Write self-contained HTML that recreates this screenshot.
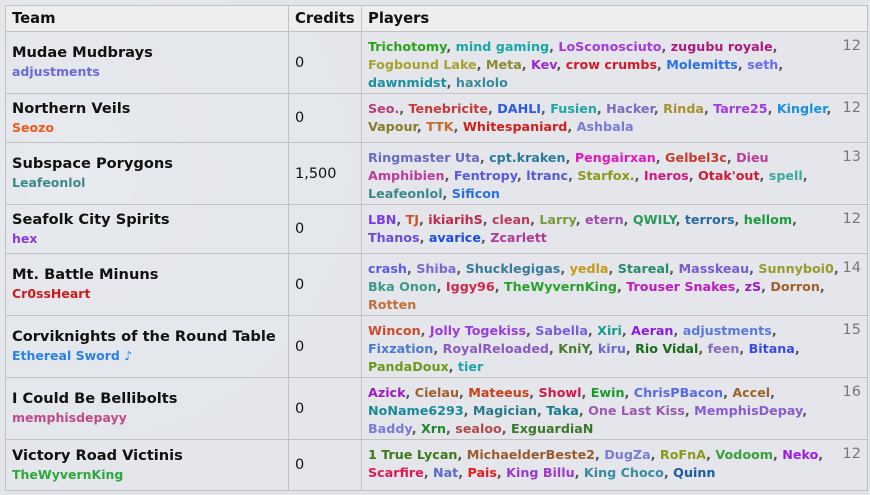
<!DOCTYPE html>
<html><head><meta charset="utf-8"><style>
html,body{margin:0;padding:0;width:870px;height:495px;overflow:hidden;background:#e4e7eb;font-family:"DejaVu Sans","Liberation Sans",sans-serif;}
body{background:radial-gradient(circle at 80px 170px,#f4f6f8 0,#e6e9ed 80px,#e1e4e9 300px),#e2e5e9;}
table{position:absolute;left:5px;top:5px;border-collapse:collapse;table-layout:fixed;width:862px;}
td,th{border:1px solid #c2c2c2;vertical-align:middle;padding:0 6px;white-space:nowrap;}
th{background:#eeeeee;height:25px;text-align:left;font-size:14.8px;font-weight:bold;color:#111;}
td{background:rgba(228,231,236,0.75);}
.t{font-size:14.6px;font-weight:bold;color:#111;line-height:18px;}
.c{font-size:14.5px;color:#111;}
.m{font-size:12.5px;font-weight:bold;line-height:19px;}
.p{font-size:12.7px;font-weight:bold;line-height:18px;color:#555;position:relative;vertical-align:top;padding-top:6px;}
.p b{font-weight:bold}
.n{position:absolute;right:6px;top:5px;font-size:14.5px;font-weight:normal;color:#777;}
</style></head><body>
<table>
<colgroup><col style="width:283px"><col style="width:73px"><col style="width:506px"></colgroup>
<tr><th>Team</th><th>Credits</th><th>Players</th></tr>
<tr style="height:62px"><td><div class="t">Mudae Mudbrays</div><div class="m" style="color:#6a6adf">adjustments</div></td><td class="c">0</td>
<td class="p"><span class="n">12</span><b style="color:#2aa21a">Trichotomy</b>, <b style="color:#1aa6a6">mind gaming</b>, <b style="color:#a23ae0">LoSconosciuto</b>, <b style="color:#b0197a">zugubu royale</b>,<br><b style="color:#a8a030">Fogbound Lake</b>, <b style="color:#8a8a30">Meta</b>, <b style="color:#9a28d0">Kev</b>, <b style="color:#d01a2a">crow crumbs</b>, <b style="color:#2a70e8">Molemitts</b>, <b style="color:#6a6af0">seth</b>,<br><b style="color:#1a90a0">dawnmidst</b>, <b style="color:#3a8a9a">haxlolo</b></td></tr>
<tr style="height:49px"><td><div class="t">Northern Veils</div><div class="m" style="color:#ee5a1a">Seozo</div></td><td class="c">0</td>
<td class="p"><span class="n">12</span><b style="color:#b83a7a">Seo.</b>, <b style="color:#c83a3a">Tenebricite</b>, <b style="color:#2a5ae0">DAHLI</b>, <b style="color:#1aa6a6">Fusien</b>, <b style="color:#7a6ac0">Hacker</b>, <b style="color:#a8902a">Rinda</b>, <b style="color:#a23ae0">Tarre25</b>, <b style="color:#1a90e0">Kingler</b>,<br><b style="color:#8a7a2a">Vapour</b>, <b style="color:#c86a2a">TTK</b>, <b style="color:#d0201a">Whitespaniard</b>, <b style="color:#7a7ad8">Ashbala</b></td></tr>
<tr style="height:62px"><td><div class="t">Subspace Porygons</div><div class="m" style="color:#3a8a8a">Leafeonlol</div></td><td class="c">1,500</td>
<td class="p"><span class="n">13</span><b style="color:#6a6ac0">Ringmaster Uta</b>, <b style="color:#2a7a9a">cpt.kraken</b>, <b style="color:#e01ac0">Pengairxan</b>, <b style="color:#c83a2a">Gelbel3c</b>, <b style="color:#c03a9a">Dieu<br>Amphibien</b>, <b style="color:#5a5ae0">Fentropy</b>, <b style="color:#5a5ad0">ltranc</b>, <b style="color:#8a9a1a">Starfox.</b>, <b style="color:#d01a7a">Ineros</b>, <b style="color:#d01a3a">Otak'out</b>, <b style="color:#3aaa9a">spell</b>,<br><b style="color:#3a8a8a">Leafeonlol</b>, <b style="color:#2a70e0">Sificon</b></td></tr>
<tr style="height:49px"><td><div class="t">Seafolk City Spirits</div><div class="m" style="color:#8a3ae0">hex</div></td><td class="c">0</td>
<td class="p"><span class="n">12</span><b style="color:#7a3ae8">LBN</b>, <b style="color:#d0502a">TJ</b>, <b style="color:#c02a4a">ikiarihS</b>, <b style="color:#c03a5a">clean</b>, <b style="color:#7a9a3a">Larry</b>, <b style="color:#a04ab0">etern</b>, <b style="color:#2a9a5a">QWILY</b>, <b style="color:#2a6aa0">terrors</b>, <b style="color:#1a9a3a">hellom</b>,<br><b style="color:#6a4ad8">Thanos</b>, <b style="color:#1a4ae8">avarice</b>, <b style="color:#b03a9a">Zcarlett</b></td></tr>
<tr style="height:62px"><td><div class="t">Mt. Battle Minuns</div><div class="m" style="color:#d01a1a">Cr0ssHeart</div></td><td class="c">0</td>
<td class="p"><span class="n">14</span><b style="color:#5a5ae8">crash</b>, <b style="color:#7a6ad0">Shiba</b>, <b style="color:#3a7a9a">Shucklegigas</b>, <b style="color:#c09a1a">yedla</b>, <b style="color:#2a8a6a">Stareal</b>, <b style="color:#7a5ad0">Masskeau</b>, <b style="color:#9a9a2a">Sunnyboi0</b>,<br><b style="color:#3a9a8a">Bka Onon</b>, <b style="color:#d02a4a">Iggy96</b>, <b style="color:#2aa02a">TheWyvernKing</b>, <b style="color:#c01ac0">Trouser Snakes</b>, <b style="color:#9a1ad0">zS</b>, <b style="color:#a0602a">Dorron</b>,<br><b style="color:#c0703a">Rotten</b></td></tr>
<tr style="height:62px"><td><div class="t">Corviknights of the Round Table</div><div class="m" style="color:#2a80e8">Ethereal Sword ♪</div></td><td class="c">0</td>
<td class="p"><span class="n">15</span><b style="color:#d04a2a">Wincon</b>, <b style="color:#9a3ae0">Jolly Togekiss</b>, <b style="color:#7a5ae0">Sabella</b>, <b style="color:#1a9a8a">Xiri</b>, <b style="color:#8a1ae8">Aeran</b>, <b style="color:#5a7ae0">adjustments</b>,<br><b style="color:#4a7ad0">Fixzation</b>, <b style="color:#8a5ac0">RoyalReloaded</b>, <b style="color:#4a7a2a">KniY</b>, <b style="color:#6a6ad0">kiru</b>, <b style="color:#1a6a1a">Rio Vidal</b>, <b style="color:#8a6ac0">feen</b>, <b style="color:#3a4ae8">Bitana</b>,<br><b style="color:#6a9a1a">PandaDoux</b>, <b style="color:#1aa6a6">tier</b></td></tr>
<tr style="height:62px"><td><div class="t">I Could Be Bellibolts</div><div class="m" style="color:#c04a8a">memphisdepayy</div></td><td class="c">0</td>
<td class="p"><span class="n">16</span><b style="color:#a01ac0">Azick</b>, <b style="color:#a0602a">Cielau</b>, <b style="color:#c8401a">Mateeus</b>, <b style="color:#d01a4a">Showl</b>, <b style="color:#1a9a2a">Ewin</b>, <b style="color:#5a6ae0">ChrisPBacon</b>, <b style="color:#a0602a">Accel</b>,<br><b style="color:#1a8a9a">NoName6293</b>, <b style="color:#2a7a8a">Magician</b>, <b style="color:#1a7a8a">Taka</b>, <b style="color:#9a5ab0">One Last Kiss</b>, <b style="color:#8a5ad0">MemphisDepay</b>,<br><b style="color:#7a7ad8">Baddy</b>, <b style="color:#1a8a2a">Xrn</b>, <b style="color:#b04a4a">sealoo</b>, <b style="color:#3a7a2a">ExguardiaN</b></td></tr>
<tr style="height:51px"><td><div class="t">Victory Road Victinis</div><div class="m" style="color:#2aaa3a">TheWyvernKing</div></td><td class="c">0</td>
<td class="p"><span class="n">12</span><b style="color:#3a7a1a">1 True Lycan</b>, <b style="color:#9a5a2a">MichaelderBeste2</b>, <b style="color:#7a7ad8">DugZa</b>, <b style="color:#8a9a1a">RoFnA</b>, <b style="color:#3aa03a">Vodoom</b>, <b style="color:#9a1ae8">Neko</b>,<br><b style="color:#e01a5a">Scarfire</b>, <b style="color:#5a6ad0">Nat</b>, <b style="color:#e81a1a">Pais</b>, <b style="color:#9a3ad0">King Billu</b>, <b style="color:#3a8aa0">King Choco</b>, <b style="color:#1a5aa0">Quinn</b></td></tr>
</table>
</body></html>
